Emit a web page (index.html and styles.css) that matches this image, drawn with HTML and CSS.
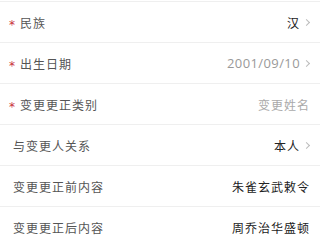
FILE: index.html
```html
<!DOCTYPE html>
<html lang="zh-CN">
<head>
  <meta charset="UTF-8" />
  <meta name="viewport" content="width=device-width, initial-scale=1" />
  <title>变更信息</title>
  <link rel="stylesheet" href="styles.css">
</head>
<body>
  <div class="form-list">
    <div class="row">
      <span class="label"><i class="req">*</i>民族</span>
      <span class="value">汉<b class="arrow"></b></span>
    </div>
    <div class="row">
      <span class="label"><i class="req">*</i>出生日期</span>
      <span class="value date">2001/09/10<b class="arrow"></b></span>
    </div>
    <div class="row">
      <span class="label"><i class="req">*</i>变更更正类别</span>
      <span class="value placeholder">变更姓名</span>
    </div>
    <div class="row">
      <span class="label plain">与变更人关系</span>
      <span class="value">本人<b class="arrow"></b></span>
    </div>
    <div class="row">
      <span class="label plain">变更更正前内容</span>
      <span class="value">朱雀玄武敕令</span>
    </div>
    <div class="row">
      <span class="label plain">变更更正后内容</span>
      <span class="value">周乔治华盛顿</span>
    </div>
  </div>
</body>
</html>
```

FILE: styles.css
```css
:root {
  --line: #efefef;
  --label: #555;
  --value: #222;
  --muted: #aaa;
  --req: #c8323c;
}
body {
  margin: 0;
  background: #fff;
  font-family: "Noto Sans CJK SC", "Noto Sans", sans-serif;
  font-size: 12px;
  width: 320px;
  height: 240px;
  overflow: hidden;
}
.form-list {
  padding-top: 1px;
}
.row {
  display: flex;
  align-items: center;
  justify-content: space-between;
  height: 40px;
  border-top: 1px solid var(--line);
  padding: 0 10px 0 13px;
}
.label {
  display: flex;
  align-items: center;
  color: var(--label);
  letter-spacing: 1px;
}
.req {
  font-style: normal;
  font-family: "DejaVu Sans", sans-serif;
  color: var(--req);
  width: 7px;
  margin-left: -4px;
  margin-right: 4px;
  font-size: 12px;
  line-height: 1;
  transform: translateY(3px);
}
.value {
  display: flex;
  align-items: center;
  color: var(--value);
  letter-spacing: 1px;
}
.value.date {
  color: #999;
  font-family: "Open Sans", "Noto Sans", sans-serif;
  font-size: 13px;
  letter-spacing: 0.4px;
}
.value.placeholder {
  color: var(--muted);
}
.arrow {
  width: 4px;
  height: 4px;
  border-top: 1px solid #bbb;
  border-right: 1px solid #bbb;
  transform: rotate(45deg);
  margin-left: 4px;
  margin-right: 1px;
}
```
